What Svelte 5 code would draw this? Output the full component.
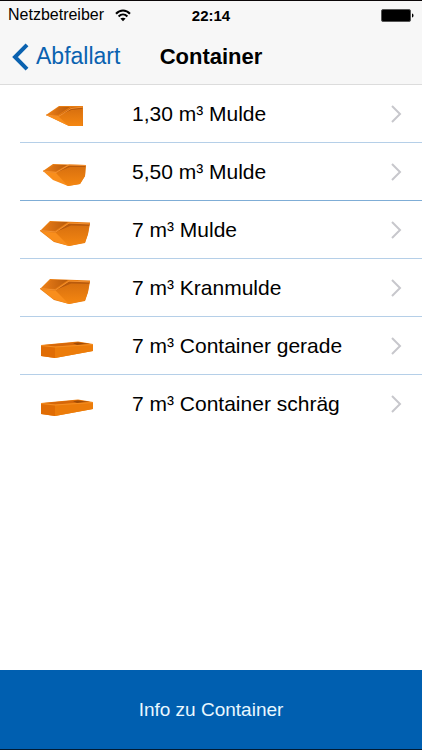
<script lang="ts">
  type Shape = 'small' | 'medium' | 'large' | 'box'

  const containers: { name: string; shape: Shape }[] = [
    { name: '1,30 m³ Mulde', shape: 'small' },
    { name: '5,50 m³ Mulde', shape: 'medium' },
    { name: '7 m³ Mulde', shape: 'large' },
    { name: '7 m³ Kranmulde', shape: 'large' },
    { name: '7 m³ Container gerade', shape: 'box' },
    { name: '7 m³ Container schräg', shape: 'box' },
  ]
</script>

<svg class="defs" width="0" height="0" aria-hidden="true">
  <defs>
    <linearGradient id="side" x1="0" y1="0" x2="0" y2="1">
      <stop offset="0" stop-color="#d8700f" />
      <stop offset="1" stop-color="#f58711" />
    </linearGradient>
    <linearGradient id="inner" x1="0" y1="0" x2="1" y2="0">
      <stop offset="0" stop-color="#e87c18" />
      <stop offset="1" stop-color="#b85a0a" />
    </linearGradient>
  </defs>
</svg>

<div class="screen">
  <div class="status-bar">
    <div class="carrier">
      <span>Netzbetreiber</span>
      <svg width="16" height="13" viewBox="0 0 16 13" fill="none" stroke="#000" stroke-width="2" aria-hidden="true">
        <path d="M1 4.7C5 .4 11 .4 15 4.7" />
        <path d="M3.6 7.5c2.6-2.6 6.2-2.6 8.8 0" />
        <path d="M8 12.2L5.4 9.6c1.5-1.3 3.7-1.3 5.2 0z" fill="#000" stroke="none" />
      </svg>
    </div>
    <time class="clock">22:14</time>
    <div class="battery">
      <svg width="33" height="13" viewBox="0 0 33 13" aria-hidden="true">
        <rect x=".5" y=".5" width="29" height="12" rx="1.5" fill="#000" stroke="#555" />
        <path d="M31 4.5c2 .5 2 3.5 0 4z" fill="#000" />
      </svg>
    </div>
  </div>

  <header class="nav-bar">
    <button type="button" class="back">
      <svg width="17" height="28" viewBox="0 0 17 28" fill="none" stroke="currentColor" stroke-width="4" aria-hidden="true">
        <path d="M15 1.8L3 14l12 12.2" />
      </svg>
      <span>Abfallart</span>
    </button>
    <h1>Container</h1>
  </header>

  <main>
    <ul class="list">
      {#each containers as item}
        <li>
          <button type="button" class="row">
            <svg class="thumb" width="56" height="36" viewBox="0 -2 56 36" aria-hidden="true">
              {#if item.shape === 'small'}
                <path d="M8 17L21 8h24v20H31z" fill="#e87c10" />
                <path d="M11 16.5L21 9h11L20 17z" fill="url(#inner)" />
                <path d="M21 17.5L33 9.5h12l-1 2-10 .5z" fill="#b85a0c" />
                <path d="M20 19l13-6.5 11.5-1.5L44 28H31z" fill="url(#side)" />
                <path d="M8 17l13 2 10 9z" fill="#f98e1c" />
                <path d="M8 17l12.5 1.5L33 10.5 45 9" fill="none" stroke="#f29032" />
              {:else if item.shape === 'medium'}
                <path d="M5 15L15 8l33 1-1 11-5 8-12 2z" fill="#e87c10" />
                <path d="M8 14.5L16 9h13l-11 6.5z" fill="url(#inner)" />
                <path d="M18 16.5L31 9.5h17l-1 2-14 .5z" fill="#b85a0c" />
                <path d="M17 17l15-6 15.5 0-.5 9-5 8-12 2z" fill="url(#side)" />
                <path d="M5 15l13 2 12 13-15-6z" fill="#f98e1c" />
                <path d="M5 15l13 1.5L31 9l17 .5" fill="none" stroke="#f29032" />
              {:else if item.shape === 'large'}
                <path d="M2 17L12 7l40 1.5v1.5l-2 10-3 9-16 3-15-4z" fill="#e87c10" />
                <path d="M5 16L13 8h17L17 17z" fill="url(#inner)" />
                <path d="M18 18L31 9.5l21 .5-1 2-18 .5z" fill="#b85a0c" />
                <path d="M17 18.5L33 11.5l18 .5-1 8-3 8.500-16 3.500z" fill="url(#side)" />
                <path d="M3 17l15 2 13 13-16-5z" fill="#f98e1c" />
                <path d="M2 16.500l15.500 1.500L31 9l21 1" fill="none" stroke="#f29032" />
              {:else}
                <path d="M3 15l37-3.500L55 14v7l-38 7-14-2z" fill="#ef7f0a" />
                <path d="M6 15l34-3 12 2-35 2.500z" fill="#d5670a" />
                <path d="M35 13.200l5-.8 12 1.600-13 1z" fill="#a04c06" />
                <path d="M17 17l38-3v7l-38 7z" fill="#ec7c0a" />
                <path d="M3 15l14 2v11L3 26z" fill="#e06c04" />
                <path d="M3 15.500l14 1.500 38-2.500" fill="none" stroke="#f58f24" />
              {/if}
            </svg>
            <span class="name">{item.name}</span>
            <svg class="chevron" width="12" height="18" viewBox="0 0 12 18" fill="none" stroke="#c7c7cc" stroke-width="2" aria-hidden="true">
              <path d="M2 1l8 8-8 8" />
            </svg>
          </button>
        </li>
      {/each}
    </ul>
  </main>

  <button type="button" class="info">Info zu Container</button>
</div>

<style>
  :global(body) {
    margin: 0;
  }

  .defs {
    position: absolute;
  }

  .screen {
    display: flex;
    flex-direction: column;
    box-sizing: border-box;
    min-height: 100vh;
    border-top: 1px solid #0b0708;
    border-bottom: 1px solid #001a33;
    background: #fff;
    color: #000;
    font-family: 'Liberation Sans', Arial, Helvetica, sans-serif;
  }

  button {
    border: none;
    margin: 0;
    padding: 0;
    background: none;
    font-family: inherit;
    color: inherit;
    cursor: pointer;
  }

  svg {
    display: block;
    flex-shrink: 0;
  }

  .status-bar {
    display: grid;
    grid-template-columns: 1fr auto 1fr;
    align-items: center;
    height: 28px;
    padding: 0 8px;
    background: #f7f7f7;
    font-size: 16px;
  }

  .carrier {
    display: flex;
    align-items: center;
    gap: 11px;
  }

  .clock {
    font-size: 15px;
    font-weight: bold;
  }

  .battery {
    display: flex;
    justify-content: flex-end;
  }

  .nav-bar {
    display: grid;
    grid-template-columns: 1fr auto 1fr;
    align-items: center;
    height: 55px;
    padding: 0 12px;
    border-bottom: 1px solid #dcdcdc;
    background: #f7f7f7;
  }

  .back {
    display: flex;
    align-items: center;
    gap: 7px;
    color: #0a62b0;
    font-size: 23px;
  }

  h1 {
    margin: 0;
    font-size: 22px;
    font-weight: bold;
  }

  main {
    flex: 1;
  }

  .list {
    list-style: none;
    margin: 0;
    padding: 0 0 0 20px;
  }

  li:not(:last-child) {
    border-bottom: 1px solid #b5cfe8;
  }

  li:nth-child(2) {
    border-bottom-color: #7fadd6;
  }

  .row {
    display: flex;
    align-items: center;
    width: 100%;
    height: 57px;
    padding: 0 20px 0 18px;
    text-align: left;
  }

  .name {
    flex: 1;
    margin-left: 38px;
    font-size: 21px;
  }

  .info {
    height: 79px;
    background: #005fb0;
    color: #e8f8ff;
    font-size: 19px;
  }
</style>
